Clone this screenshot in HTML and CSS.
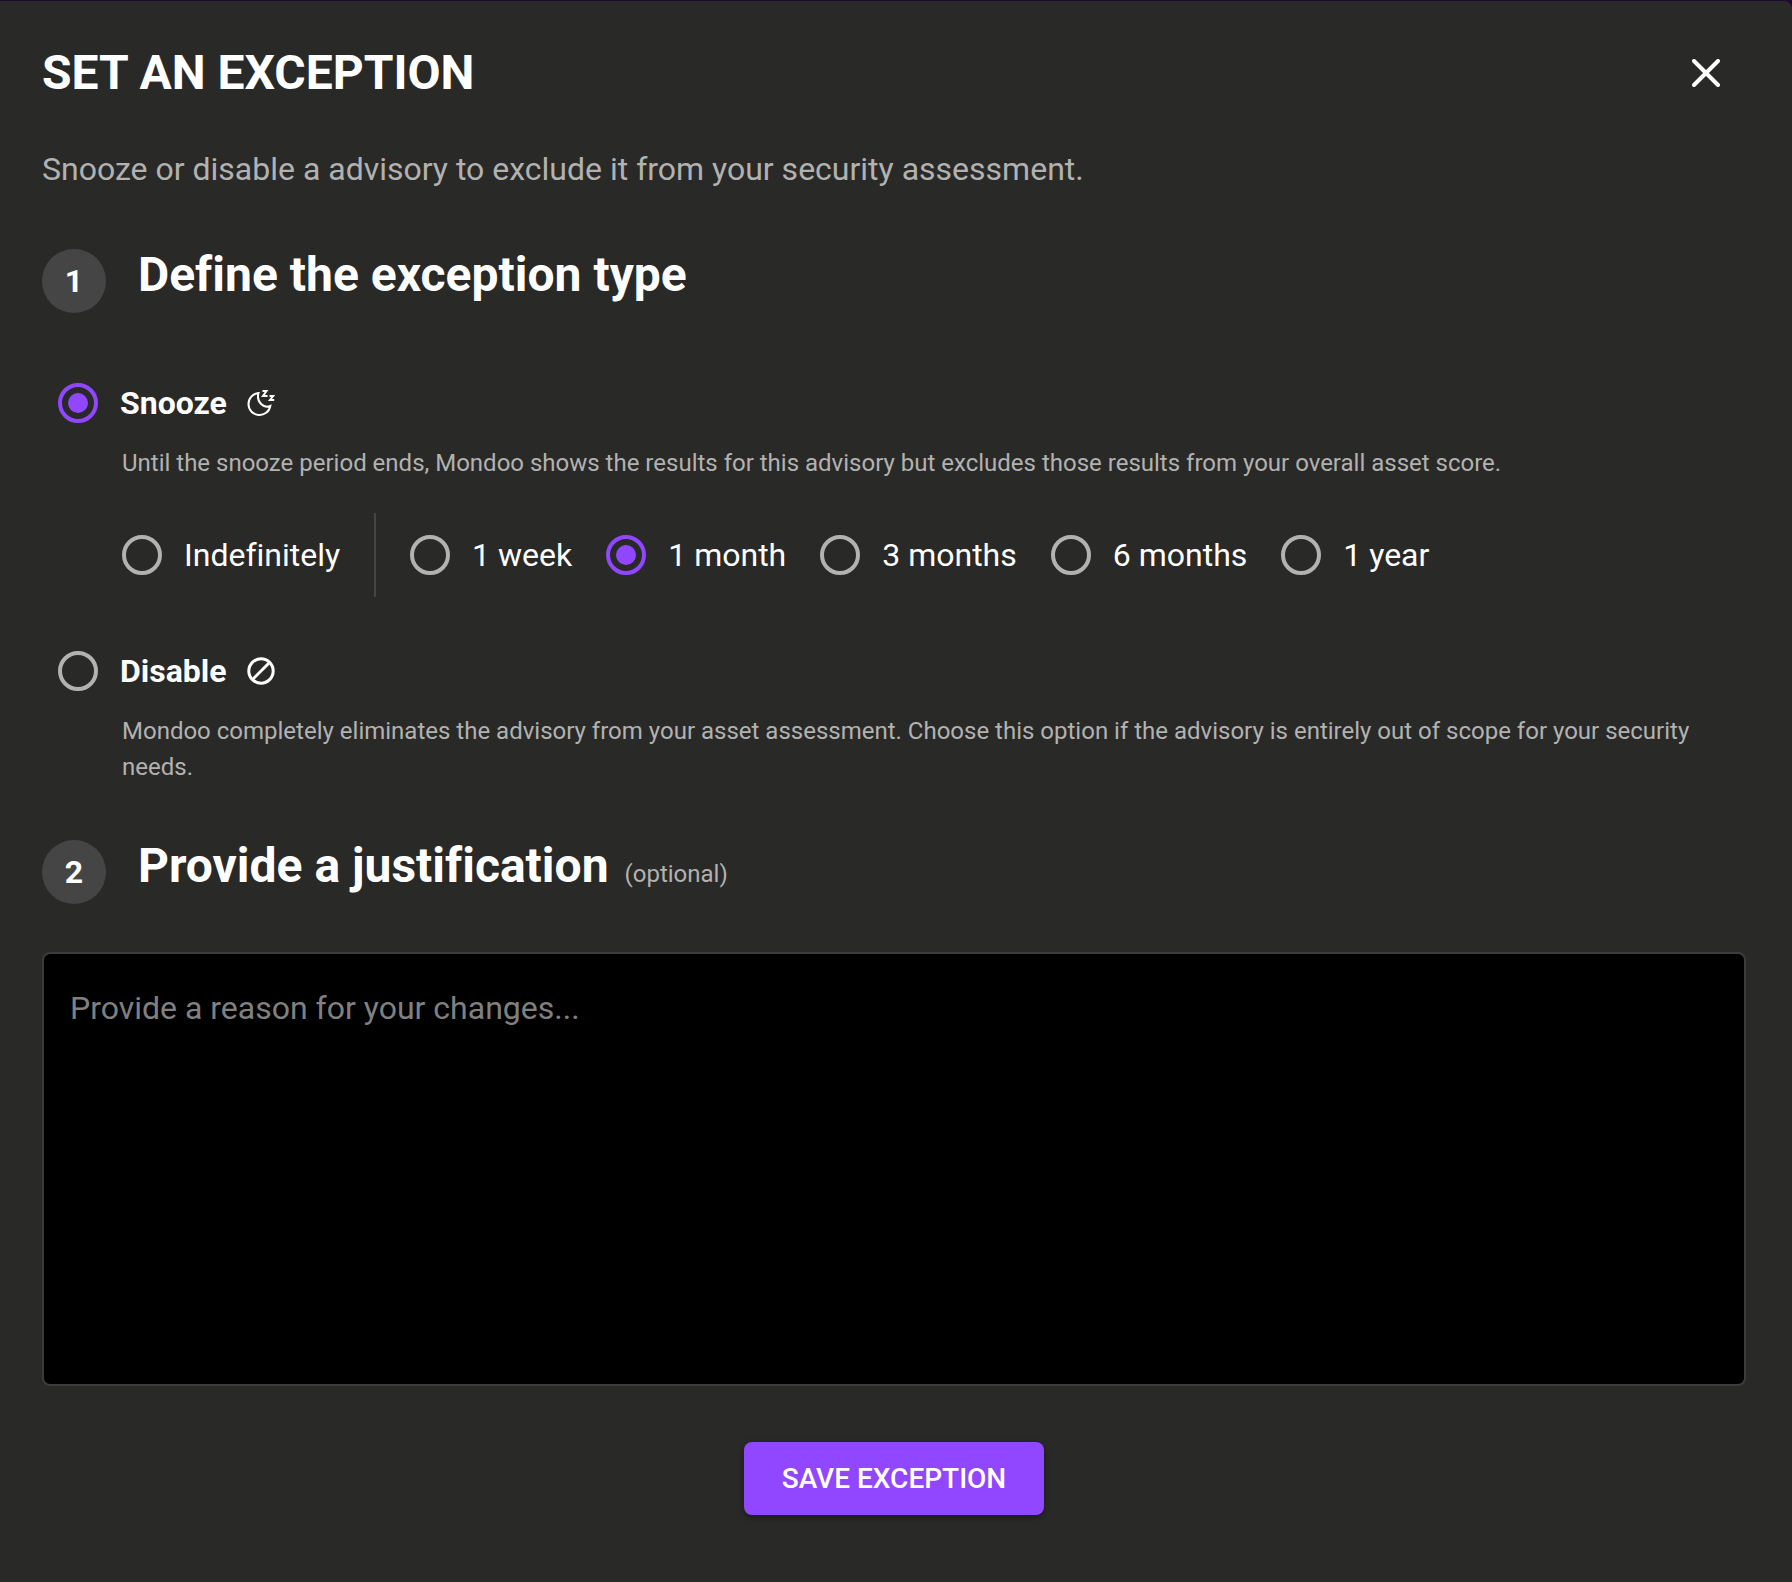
FILE: index.html
```html
<!DOCTYPE html>
<html lang="en">
<head>
<meta charset="utf-8">
<meta name="viewport" content="width=device-width, initial-scale=1">
<title>Set an exception</title>
<link rel="stylesheet" href="styles.css">
</head>
<body>
<main class="dialog">
  <header class="dialog-header">
    <h1 class="dialog-title">SET AN EXCEPTION</h1>
    <button class="close" type="button" aria-label="Close">
      <svg class="close-icon" viewBox="0 0 28 28" aria-hidden="true"><path d="M2 2 26 26M26 2 2 26"/></svg>
    </button>
  </header>
  <p class="intro">Snooze or disable a advisory to exclude it from your security assessment.</p>

  <form class="form">
    <div class="step">
      <span class="step-number">1</span>
      <h2 class="step-title">Define the exception type</h2>
    </div>

    <section class="choice">
      <label class="choice-label">
        <input class="radio" type="radio" name="type" value="snooze" checked>
        <span class="choice-name">Snooze</span>
        <svg class="choice-icon" viewBox="0 0 28 28" aria-hidden="true">
          <path d="M11.500 4.100A11 11 0 1 0 23.300 17C17 20 9 13 11.500 4.100Z"/>
          <path d="M15.500 2h4l-3.500 5h4.500M22.500 7h3.700l-3.200 4h4.200"/>
        </svg>
      </label>
      <p class="choice-text">Until the snooze period ends, Mondoo shows the results for this advisory but excludes those results from your overall asset score.</p>
      <div class="durations">
        <label class="duration duration-first"><input class="radio" type="radio" name="duration"><span>Indefinitely</span></label>
        <label class="duration"><input class="radio" type="radio" name="duration"><span>1 week</span></label>
        <label class="duration"><input class="radio" type="radio" name="duration" checked><span>1 month</span></label>
        <label class="duration"><input class="radio" type="radio" name="duration"><span>3 months</span></label>
        <label class="duration"><input class="radio" type="radio" name="duration"><span>6 months</span></label>
        <label class="duration"><input class="radio" type="radio" name="duration"><span>1 year</span></label>
      </div>
    </section>

    <section class="choice">
      <label class="choice-label">
        <input class="radio" type="radio" name="type" value="disable">
        <span class="choice-name">Disable</span>
        <svg class="choice-icon choice-icon-bold" viewBox="0 0 28 28" aria-hidden="true"><circle cx="14" cy="14" r="12.200"/><path d="M5.500 22.500 22.500 5.500"/></svg>
      </label>
      <p class="choice-text">Mondoo completely eliminates the advisory from your asset assessment. Choose this option if the advisory is entirely out of scope for your security needs.</p>
    </section>

    <div class="step">
      <span class="step-number">2</span>
      <h2 class="step-title"><label for="reason">Provide a justification<small class="optional">(optional)</small></label></h2>
    </div>
    <textarea class="reason" id="reason" placeholder="Provide a reason for your changes..."></textarea>

    <button class="save" type="submit">SAVE EXCEPTION</button>
  </form>
</main>
</body>
</html>
```

FILE: styles.css
```css
* {
  box-sizing: border-box;
}

body {
  margin: 0;
  padding-top: 1px;
  background: #1f0a36;
  color: #fff;
  font-family: Roboto, sans-serif;
  font-size: 32px;
  font-variant-ligatures: none;
  line-height: 48px;
}

h1,
h2,
p {
  margin: 0;
}

.dialog {
  min-height: calc(100vh - 1px);
  padding: 40px 46px 64px 42px;
  border-radius: 0 8px 0 0;
  background: #292928;
}

.dialog-header {
  display: flex;
  align-items: center;
  justify-content: space-between;
  height: 64px;
}

.dialog-title {
  font-size: 48px;
  font-weight: 700;
  line-height: 56px;
}

.close {
  display: grid;
  place-items: center;
  width: 80px;
  height: 80px;
  padding: 0;
  border: 0;
  background: none;
  color: #fff;
}

.close-icon {
  width: 28px;
  height: 28px;
  fill: none;
  stroke: currentColor;
  stroke-linecap: round;
  stroke-width: 4;
}

.intro {
  margin-top: 40px;
  color: #b2b2b1;
}

.form {
  display: flex;
  flex-direction: column;
}

.step {
  display: flex;
  gap: 32px;
  margin-top: 56px;
}

.choice + .step {
  margin-top: 55px;
}

.step-number {
  display: grid;
  flex: none;
  place-items: center;
  width: 64px;
  height: 64px;
  border-radius: 50%;
  background: #454545;
  font-weight: 700;
}

.step-title {
  font-size: 48px;
  font-weight: 700;
  line-height: 52px;
}

.optional {
  margin-left: 16px;
  color: #b2b2b1;
  font-size: 24px;
  font-weight: 400;
}

.choice {
  margin-top: 54px;
  padding-left: 16px;
}

.step + .choice {
  margin-top: 70px;
}

.choice-label {
  display: flex;
  align-items: center;
  width: fit-content;
  height: 40px;
}

.choice-name {
  margin: 0 20px 0 22px;
  font-weight: 700;
}

.choice-icon {
  width: 28px;
  height: 28px;
  fill: none;
  stroke: #fff;
  stroke-width: 2;
}

.choice-icon-bold {
  stroke-width: 3;
}

.choice-text {
  margin-top: 22px;
  padding: 0 16px 0 64px;
  color: #b2b2b1;
  font-size: 24px;
  line-height: 36px;
}

.radio {
  display: grid;
  flex: none;
  place-items: center;
  width: 40px;
  height: 40px;
  margin: 0;
  border: 4px solid #b2b2b1;
  border-radius: 50%;
  appearance: none;
}

.radio:checked {
  border-color: #9147ff;
}

.radio:checked::before {
  width: 20px;
  height: 20px;
  border-radius: 50%;
  background: #9147ff;
  content: "";
}

.durations {
  display: flex;
  flex-wrap: wrap;
  gap: 34px;
  margin: 32px 0 0 64px;
}

.duration {
  display: flex;
  align-items: center;
  gap: 22px;
  height: 84px;
}

.duration-first {
  padding-right: 34px;
  border-right: 2px solid #454545;
}

.reason {
  display: block;
  width: 100%;
  height: 434px;
  margin-top: 48px;
  padding: 30px 26px;
  border: 2px solid #3c3c3c;
  border-radius: 8px;
  background: #000;
  color: #fff;
  font: inherit;
  resize: none;
}

.reason::placeholder {
  color: #808080;
  opacity: 1;
}

.save {
  align-self: center;
  margin-top: 56px;
  padding: 12px 38px;
  border: 0;
  border-radius: 8px;
  background: #9147ff;
  box-shadow: 0 2px 6px rgba(0, 0, 0, 0.4);
  color: #fff;
  font: 500 28px/49px Roboto, sans-serif;
}
```
